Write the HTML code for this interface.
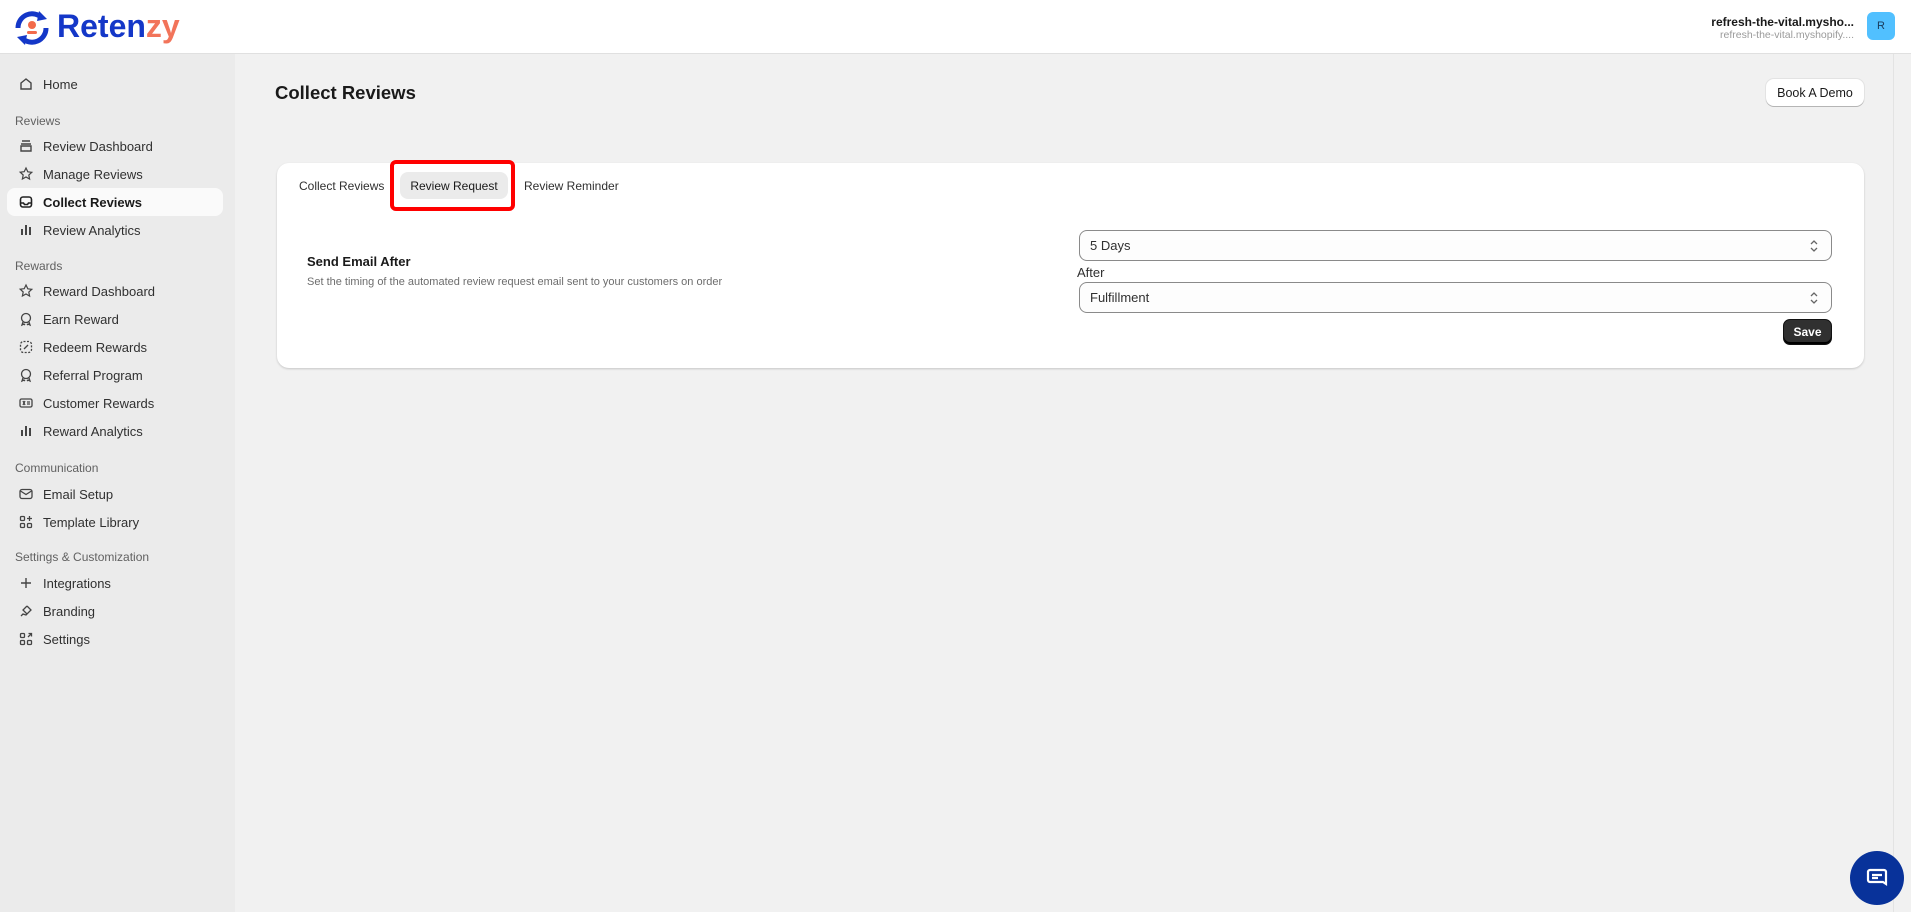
<!DOCTYPE html>
<html><head><meta charset="utf-8"><style>
*{box-sizing:border-box;margin:0;padding:0}
body{width:1911px;height:912px;overflow:hidden;font-family:"Liberation Sans",sans-serif;background:#f1f1f1;color:#303030;position:relative}
.hdr{position:absolute;left:0;top:0;width:1911px;height:54px;background:#fff;border-bottom:1px solid #e0e0e0}
.side{position:absolute;left:0;top:54px;width:235px;height:858px;background:#ebebeb}
.it{position:absolute;left:0;height:28px;width:235px;font-size:13px;color:#303030;display:flex;align-items:center}
.it svg{position:absolute;left:18px;width:16px;height:16px}
.it span{position:absolute;left:43px}
.lbl{position:absolute;left:15px;font-size:12px;color:#616161}
.sel{background:#fafafa;border-radius:8px;left:7px;width:216px}
.sel span{font-weight:bold;color:#1a1a1a}
.card{position:absolute;left:277px;top:163px;width:1587px;height:205px;background:#fff;border-radius:12px;box-shadow:0 1px 2px rgba(0,0,0,.18)}
.select{position:absolute;left:1079px;width:753px;height:31px;border:1px solid #8a8a8a;border-radius:8px;background:#fdfdfd;font-size:13px;padding-left:10px;display:flex;align-items:center}
.select svg{position:absolute;right:12px;top:8px}
.sb{position:absolute;left:1893px;top:54px;width:18px;height:858px;background:#f1f1f1;border-left:1px solid #e3e3e3}
</style></head><body>
<div class="hdr">
<svg style="position:absolute;left:12px;top:9px" width="40" height="38" viewBox="0 0 40 38"><path d="M6 19a14 14 0 0 1 24-10" stroke="#1437c8" stroke-width="5" fill="none"/><path d="M34 19a14 14 0 0 1-24 10" stroke="#1437c8" stroke-width="5" fill="none"/><polygon points="27,2 35,10 25,12" fill="#1437c8"/><polygon points="13,36 5,28 15,26" fill="#1437c8"/><circle cx="20" cy="16" r="4" fill="#f26b4c"/><rect x="15" y="22" width="10" height="3" rx="1.5" fill="#f26b4c"/></svg>
<div style="position:absolute;left:57px;top:8px;font-size:32px;font-weight:bold;color:#1437c8">Reten<span style="color:#f2745a">zy</span></div>
<div style="position:absolute;right:57px;top:15px;font-size:12px;font-weight:bold;color:#1a1a1a">refresh-the-vital.mysho...</div>
<div style="position:absolute;right:57px;top:29px;font-size:10.5px;color:#9a9a9a">refresh-the-vital.myshopify....</div>
<div style="position:absolute;left:1867px;top:12px;width:28px;height:28px;border-radius:6px;background:#51c0ff;font-size:11px;display:flex;align-items:center;justify-content:center;color:#1a3a5a">R</div>
</div>
<div class="side">
<div class="it" style="top:16px"><svg viewBox="0 0 16 16" fill="none" stroke="#444" stroke-width="1.4"><path d="M3 7l5-4 5 4v6H3z"/></svg><span>Home</span></div>
<div class="lbl" style="top:60px">Reviews</div>
<div class="it" style="top:78px"><svg viewBox="0 0 16 16" fill="none" stroke="#444" stroke-width="1.4"><path d="M4 3h8M3 6h10M3 8h10v5H3z"/></svg><span>Review Dashboard</span></div>
<div class="it" style="top:106px"><svg viewBox="0 0 16 16" fill="none" stroke="#444" stroke-width="1.2"><path d="M8 2l1.8 3.8 4 .5-3 2.8.8 4L8 11l-3.6 2 .8-4-3-2.8 4-.5z"/></svg><span>Manage Reviews</span></div>
<div class="it sel" style="top:134px"><svg style="left:11px" viewBox="0 0 16 16" fill="none" stroke="#222" stroke-width="1.6"><rect x="2.5" y="3" width="11" height="10" rx="2.5"/><path d="M2.5 9h3l1 1.5h3l1-1.5h3"/></svg><span style="left:36px">Collect Reviews</span></div>
<div class="it" style="top:162px"><svg viewBox="0 0 16 16" fill="#444"><rect x="3" y="7" width="2" height="6"/><rect x="7" y="3" width="2" height="10"/><rect x="11" y="5" width="2" height="8"/></svg><span>Review Analytics</span></div>
<div class="lbl" style="top:205px">Rewards</div>
<div class="it" style="top:223px"><svg viewBox="0 0 16 16" fill="none" stroke="#444" stroke-width="1.2"><path d="M8 2l1.8 3.8 4 .5-3 2.8.8 4L8 11l-3.6 2 .8-4-3-2.8 4-.5z"/></svg><span>Reward Dashboard</span></div>
<div class="it" style="top:251px"><svg viewBox="0 0 16 16" fill="none" stroke="#444" stroke-width="1.3"><circle cx="8" cy="7" r="4.5"/><path d="M5 11l-1 3 2-1 1 1M11 11l1 3-2-1-1 1"/></svg><span>Earn Reward</span></div>
<div class="it" style="top:279px"><svg viewBox="0 0 16 16" fill="none" stroke="#444" stroke-width="1.3" stroke-dasharray="2 1.5"><rect x="2.5" y="2.5" width="11" height="11" rx="3"/><path d="M6 10l4-4" stroke-dasharray="none"/></svg><span>Redeem Rewards</span></div>
<div class="it" style="top:307px"><svg viewBox="0 0 16 16" fill="none" stroke="#444" stroke-width="1.3"><circle cx="8" cy="7" r="4.5"/><path d="M5 11l-1 3 2-1 1 1M11 11l1 3-2-1-1 1"/></svg><span>Referral Program</span></div>
<div class="it" style="top:335px"><svg viewBox="0 0 16 16" fill="none" stroke="#444" stroke-width="1.3"><rect x="2" y="4" width="12" height="8" rx="1.5"/><path d="M5 6l2 4M7 6l-2 4M9 7h3M9 9h3"/></svg><span>Customer Rewards</span></div>
<div class="it" style="top:363px"><svg viewBox="0 0 16 16" fill="#444"><rect x="3" y="7" width="2" height="6"/><rect x="7" y="3" width="2" height="10"/><rect x="11" y="5" width="2" height="8"/></svg><span>Reward Analytics</span></div>
<div class="lbl" style="top:407px">Communication</div>
<div class="it" style="top:426px"><svg viewBox="0 0 16 16" fill="none" stroke="#444" stroke-width="1.3"><rect x="2" y="3.5" width="12" height="9" rx="2"/><path d="M2.5 5l5.5 3.5L13.5 5"/></svg><span>Email Setup</span></div>
<div class="it" style="top:454px"><svg viewBox="0 0 16 16" fill="none" stroke="#444" stroke-width="1.3"><rect x="2.5" y="2.5" width="4" height="4" rx="1"/><rect x="2.5" y="9.5" width="4" height="4" rx="1"/><rect x="9.5" y="9.5" width="4" height="4" rx="1"/><path d="M11.5 2v5M9 4.5h5"/></svg><span>Template Library</span></div>
<div class="lbl" style="top:496px">Settings &amp; Customization</div>
<div class="it" style="top:515px"><svg viewBox="0 0 16 16" fill="none" stroke="#444" stroke-width="1.4"><path d="M8 3v10M3 8h10"/></svg><span>Integrations</span></div>
<div class="it" style="top:543px"><svg viewBox="0 0 16 16" fill="none" stroke="#444" stroke-width="1.3"><path d="M9 3l4 4-5 5-3-1-2 2M9 3L5 7l4 4"/></svg><span>Branding</span></div>
<div class="it" style="top:571px"><svg viewBox="0 0 16 16" fill="none" stroke="#444" stroke-width="1.3"><rect x="2.5" y="2.5" width="4" height="4" rx="1"/><rect x="2.5" y="9.5" width="4" height="4" rx="1"/><rect x="9.5" y="9.5" width="4" height="4" rx="1"/><path d="M10 6l3.5-3.5M10.5 2.5h3v3"/></svg><span>Settings</span></div>
</div>
<div class="sb"></div>
<div style="position:absolute;left:275px;top:82px;font-size:18.5px;font-weight:bold;color:#1a1a1a">Collect Reviews</div>
<div style="position:absolute;left:1766px;top:79px;width:98px;height:27px;background:#fff;border-radius:8px;box-shadow:0 1px 0 #b5b5b5,0 0 0 1px #e3e3e3;font-size:12.5px;display:flex;align-items:center;justify-content:center;color:#1a1a1a">Book A Demo</div>
<div class="card">
<div style="position:absolute;left:22px;top:16px;font-size:12px;color:#303030">Collect Reviews</div>
<div style="position:absolute;left:123px;top:9px;width:108px;height:27px;background:#ebebeb;border-radius:8px;font-size:12px;display:flex;align-items:center;justify-content:center;color:#1a1a1a">Review Request</div>
<div style="position:absolute;left:113px;top:-3px;width:125px;height:51px;border:4px solid #ff0000;border-radius:6px"></div>
<div style="position:absolute;left:247px;top:16px;font-size:12px;color:#303030">Review Reminder</div>
<div style="position:absolute;left:30px;top:91px;font-size:13px;font-weight:bold;color:#1a1a1a">Send Email After</div>
<div style="position:absolute;left:30px;top:113px;font-size:11px;color:#6d6d6d">Set the timing of the automated review request email sent to your customers on order</div>
</div>
<div class="select" style="top:230px">5 Days<svg width="10" height="14" viewBox="0 0 10 14" fill="none" stroke="#666" stroke-width="1.3"><path d="M2 5l3-3 3 3M2 9l3 3 3-3"/></svg></div>
<div style="position:absolute;left:1077px;top:265px;font-size:13px;color:#303030">After</div>
<div class="select" style="top:282px">Fulfillment<svg width="10" height="14" viewBox="0 0 10 14" fill="none" stroke="#666" stroke-width="1.3"><path d="M2 5l3-3 3 3M2 9l3 3 3-3"/></svg></div>
<div style="position:absolute;left:1783px;top:319px;width:49px;height:26px;background:#303030;border-radius:7px;box-shadow:inset 0 -2px 0 #000;border:1px solid #111;color:#fff;font-size:12px;font-weight:bold;display:flex;align-items:center;justify-content:center">Save</div>
<div style="position:absolute;left:1850px;top:851px;width:54px;height:54px;border-radius:50%;background:#08329a;display:flex;align-items:center;justify-content:center"><svg width="24" height="24" viewBox="0 0 24 24" fill="none" stroke="#fff" stroke-width="2.2"><path d="M5 4h14a2 2 0 0 1 2 2v12l-3-2H5a2 2 0 0 1-2-2V6a2 2 0 0 1 2-2z"/><path d="M7 9h10M7 12h6"/></svg></div>
</body></html>
